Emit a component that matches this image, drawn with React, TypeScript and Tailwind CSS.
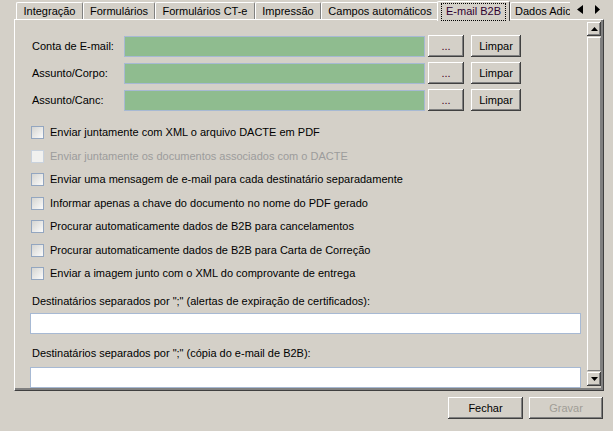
import React from 'react'

const raised =
  'shadow-[inset_-1px_-1px_0_#404040,inset_1px_1px_0_#ffffff,inset_-2px_-2px_0_#808080]'

const Btn = ({ children, className = '' }: { children: React.ReactNode; className?: string }) => (
  <div className={`flex h-[22px] items-center justify-center bg-[#d4d0c8] ${raised} ${className}`}>
    {children}
  </div>
)

const tabs = [
  { label: 'Integração', w: 'w-[67px]' },
  { label: 'Formulários', w: 'w-[72px]' },
  { label: 'Formulários CT-e', w: 'w-[100px]' },
  { label: 'Impressão', w: 'w-[66px]' },
  { label: 'Campos automáticos', w: 'w-[118px]' },
]

const checks = [
  { label: 'Enviar juntamente com XML o arquivo DACTE em PDF' },
  { label: 'Enviar juntamente os documentos associados com o DACTE', disabled: true },
  { label: 'Enviar uma mensagem de e-mail para cada destinatário separadamente' },
  { label: 'Informar apenas a chave do documento no nome do PDF gerado' },
  { label: 'Procurar automaticamente dados de B2B para cancelamentos' },
  { label: 'Procurar automaticamente dados de B2B para Carta de Correção' },
  { label: 'Enviar a imagem junto com o XML do comprovante de entrega' },
]

function FieldRow({ label }: { label: string }) {
  return (
    <div className="flex h-[22px] items-center pl-[17px]">
      <span className="w-[92px]">{label}</span>
      <div className="h-[21px] w-[301px] border border-[#a7b9d3] bg-[#8fbc8f]" />
      <Btn className="ml-[3px] w-[36px] text-[#400020]">...</Btn>
      <Btn className="ml-[7px] w-[50px]">Limpar</Btn>
    </div>
  )
}

function Check({ label, disabled }: { label: string; disabled?: boolean }) {
  return (
    <div className="flex h-[23.5px] items-center gap-[6px] pl-[16px]">
      <div
        className={
          disabled
            ? 'h-[13px] w-[13px] border border-[#c9d2dd] bg-[#f1f1ef]'
            : 'h-[13px] w-[13px] border border-[#93a6c0] bg-linear-to-br from-[#d5d5d2] to-[#fbfbfb]'
        }
      />
      <span className={disabled ? 'text-[#9c9c9c]' : ''}>{label}</span>
    </div>
  )
}

export default function App() {
  return (
    <div className="relative h-[431px] w-[613px] overflow-hidden bg-[#d4d0c8] font-['Liberation_Sans',Arial,sans-serif] text-[11px] leading-[13px] text-black">
      {/* tab strip */}
      <div className="relative z-10 flex h-[19px] items-end pl-[16px]">
        {tabs.map((t) => (
          <div
            key={t.label}
            className={`flex h-[17px] shrink-0 items-center justify-center rounded-t-[2px] border-t border-l border-r border-t-white border-l-white border-r-[#808080] ${t.w}`}
          >
            {t.label}
          </div>
        ))}
        <div className="-ml-[2px] flex h-[20px] w-[73px] shrink-0 translate-y-[1px] items-start justify-center self-start rounded-t-[2px] border-t border-l border-r border-t-white border-l-white border-r-[#404040] bg-[#d4d0c8] pt-[1px]">
          <span className="border border-dotted border-black px-[4px] pt-[1px] pb-[2px] text-[#300030]">E-mail B2B</span>
        </div>
        <div className="flex h-[17px] w-[90px] shrink-0 items-center rounded-t-[2px] border-t border-l border-t-white border-l-white pl-[4px]">
          Dados Adicionais
        </div>
      </div>

      {/* tab scroll arrows */}
      <div className="absolute top-0 left-[570px] z-20 flex h-[19px] w-[43px] items-center gap-[9px] bg-[#d4d0c8] pl-[6px]">
        <svg width="8" height="9" viewBox="0 0 8 9">
          <path d="M7 0 L7 9 L1 4.5 Z" fill="#000" />
        </svg>
        <svg width="8" height="9" viewBox="0 0 8 9">
          <path d="M2 0 L2 9 L7 4.5 Z" fill="#000" />
        </svg>
      </div>

      {/* tab page */}
      <div className="ml-[14px] h-[372px] w-[590px] border-t border-l border-r border-b border-t-white border-l-white border-r-[#404040] border-b-[#404040]">
        <div className="flex h-full w-full border-r-2 border-b-2 border-[#808080]">
          <div className="flex-1 overflow-hidden pt-[15px]">
            <div className="flex flex-col gap-[5px]">
              <FieldRow label="Conta de E-mail:" />
              <FieldRow label="Assunto/Corpo:" />
              <FieldRow label="Assunto/Canc:" />
            </div>

            <div className="mt-[10px]">
              {checks.map((c) => (
                <Check key={c.label} label={c.label} disabled={c.disabled} />
              ))}
            </div>

            <div className="mt-[9px] pl-[17px]">
              Destinatários separados por ";" (alertas de expiração de certificados):
            </div>
            <div className="mt-[5px] ml-[15px] h-[21px] w-[551px] border border-[#a7b9d3] bg-white" />
            <div className="mt-[13px] pl-[17px]">Destinatários separados por ";" (cópia do e-mail de B2B):</div>
            <div className="mt-[7px] ml-[15px] h-[21px] w-[551px] border border-[#a7b9d3] bg-white" />
          </div>

          {/* vertical scrollbar */}
          <div className="my-[2px] flex w-[14px] flex-col">
            <div className={`flex h-[14px] items-center justify-center bg-[#d4d0c8] ${raised}`}>
              <svg width="7" height="4" viewBox="0 0 7 4">
                <path d="M0 4 L7 4 L3.5 0 Z" fill="#000" />
              </svg>
            </div>
            <div className="flex-1 bg-[#d4d0c8] py-[1px]">
              <div className="h-full border-t border-l border-r border-b border-t-white border-l-white border-r-[#808080] border-b-[#808080]" />
            </div>
            <div className={`flex h-[14px] items-center justify-center bg-[#d4d0c8] ${raised}`}>
              <svg width="7" height="4" viewBox="0 0 7 4">
                <path d="M0 0 L7 0 L3.5 4 Z" fill="#000" />
              </svg>
            </div>
          </div>
        </div>
      </div>

      {/* footer buttons */}
      <div className="mt-[6px] flex justify-end gap-[6px] pr-[10px]">
        <Btn className="w-[75px]">Fechar</Btn>
        <Btn className="w-[74px] text-[#a09d96]">Gravar</Btn>
      </div>
    </div>
  )
}
